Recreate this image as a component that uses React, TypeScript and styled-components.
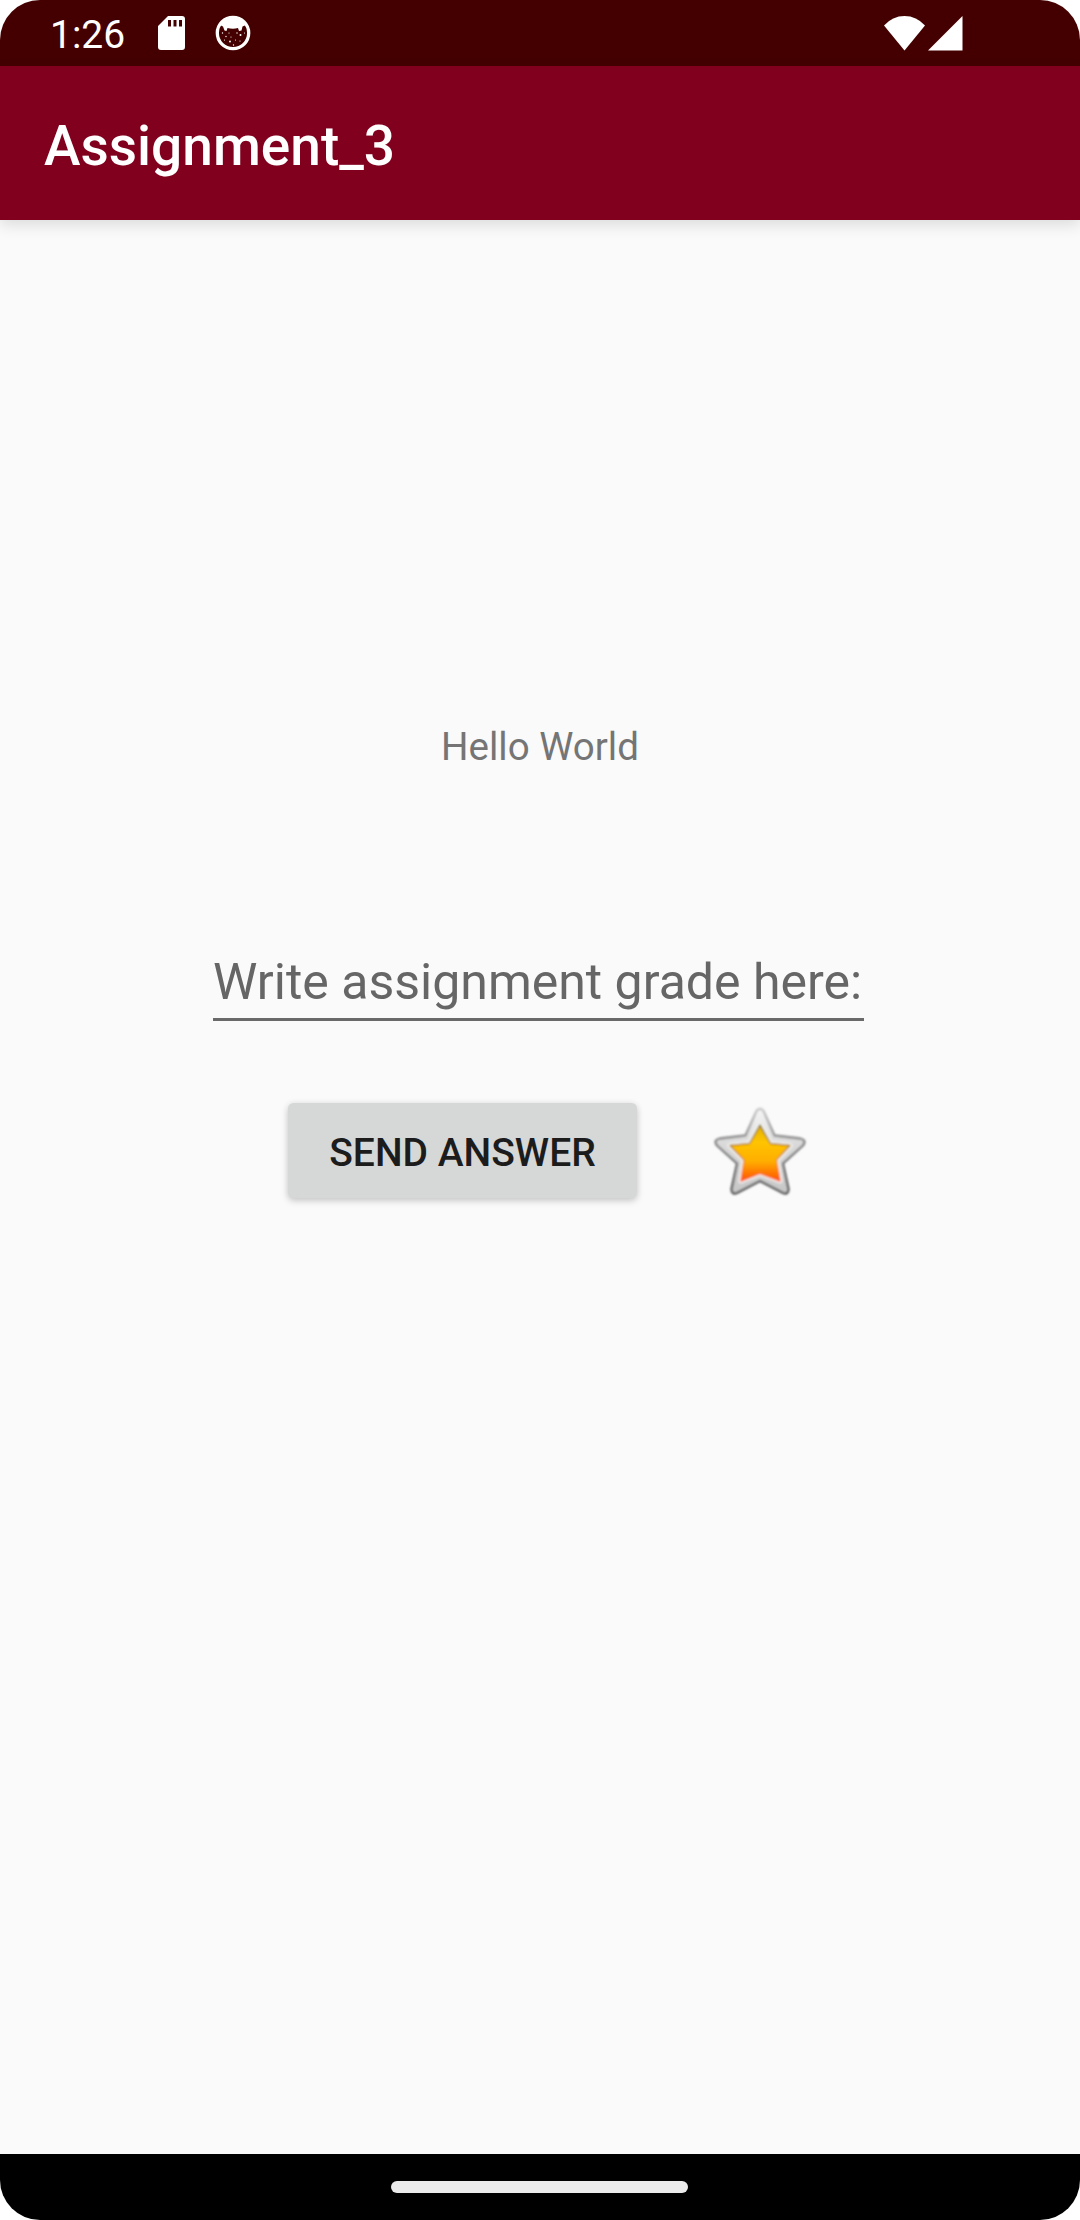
import React from "react";
import styled, { createGlobalStyle } from "styled-components";

const GlobalStyle = createGlobalStyle`
  *, *::before, *::after { box-sizing: border-box; }
  html, body { margin: 0; background: #ffffff; }
  body { font-family: Roboto, "Noto Sans", sans-serif; }
`;

const Screen = styled.div`
  width: 1080px;
  height: 2220px;
  display: flex;
  flex-direction: column;
  overflow: hidden;
  border-radius: 40px;
  background: #fafafa;
`;

const StatusBar = styled.header`
  flex: none;
  height: 66px;
  padding: 0 117px 0 50px;
  display: flex;
  justify-content: space-between;
  background: #440000;
  color: #ffffff;
`;

const StatusGroup = styled.div<{ $gap: number }>`
  display: flex;
  align-items: center;
  gap: ${(p) => p.$gap}px;
`;

const Clock = styled.time`
  width: 78px;
  padding-top: 3px;
  font-size: 39px;
  line-height: 46px;
  white-space: nowrap;
`;

const Glyph = styled.svg`
  display: block;
  flex: none;
`;

const AppBar = styled.div`
  flex: none;
  height: 154px;
  padding: 6px 44px 0;
  display: flex;
  align-items: center;
  background: #80001e;
  box-shadow: 0 5px 14px rgba(0, 0, 0, 0.12);
`;

const Title = styled.h1`
  margin: 0;
  color: #ffffff;
  font-size: 55px;
  font-weight: 500;
  line-height: 64px;
`;

const Content = styled.main`
  flex: 1;
  display: flex;
  flex-direction: column;
  align-items: center;
  padding-top: 501px;
`;

const Greeting = styled.p`
  margin: 0;
  color: #757575;
  font-size: 38.5px;
  line-height: 52px;
`;

const GradeInput = styled.input`
  width: 651px;
  height: 75px;
  margin: 173px 3px 0 0;
  padding: 0 0 1px;
  border: 0;
  border-bottom: 3px solid #696969;
  border-radius: 0;
  outline: 0;
  background: transparent;
  font-family: inherit;
  font-size: 50px;
  color: #1f1f1f;

  &::placeholder {
    color: #666666;
    opacity: 1;
  }
`;

const ActionRow = styled.div`
  width: 1080px;
  margin-top: 81px;
  padding-left: 288px;
  display: flex;
  align-items: flex-start;
  gap: 73px;
`;

const SendButton = styled.button`
  width: 349px;
  height: 95px;
  margin-top: 1px;
  padding: 4px 0 0;
  border: 0;
  border-radius: 5.5px;
  background: #d6d8d7;
  box-shadow: 0 3px 7px rgba(0, 0, 0, 0.18), 0 0 7px rgba(0, 0, 0, 0.06);
  color: #1c1c1c;
  font-family: inherit;
  font-size: 39px;
  font-weight: 500;
  line-height: 46px;
  text-transform: uppercase;
  white-space: nowrap;
`;

const NavBar = styled.footer`
  flex: none;
  height: 66px;
  display: flex;
  align-items: center;
  justify-content: center;
  background: #000000;
`;

const HomePill = styled.div`
  width: 297px;
  height: 12px;
  margin-right: 1px;
  border-radius: 6px;
  background: #ebebeb;
`;

const SdCardIcon = () => (
  <Glyph width="27" height="34" viewBox="0 0 27 34">
    <path
      fill="#fff"
      fillRule="evenodd"
      d="M10 0H24a3 3 0 0 1 3 3V31a3 3 0 0 1-3 3H3a3 3 0 0 1-3-3V10ZM10 4v6.500h3V4ZM15.500 4v6.500h3V4ZM21 4v6.500h3V4Z"
    />
  </Glyph>
);

const CatIcon = () => (
  <Glyph width="36" height="36" viewBox="0 0 36 36">
    <circle cx="18" cy="18" r="15.700" fill="none" stroke="#fff" strokeWidth="3.300" />
    <path
      fill="#fff"
      d="M5 10Q9 2 18 2T31 10L27.500 11.500 26.500 15.500 24 16 23 13Q18 14.500 12.500 13L11.500 16 9.500 15.500 8 11.500Z"
    />
    <g fill="#fff">
      <circle cx="7.500" cy="18" r=".7" />
      <circle cx="14" cy="18" r=".6" />
      <circle cx="11" cy="21.500" r=".7" />
      <circle cx="16" cy="22" r=".6" />
      <circle cx="22" cy="18" r=".7" />
      <circle cx="25.500" cy="20" r="1" />
      <circle cx="29.500" cy="18" r=".6" />
      <circle cx="9.500" cy="25" r=".6" />
      <circle cx="15" cy="26.500" r=".9" />
      <circle cx="20.500" cy="25" r=".6" />
      <circle cx="25" cy="26" r=".6" />
      <circle cx="18.500" cy="30" r=".7" />
    </g>
  </Glyph>
);

const WifiIcon = () => (
  <Glyph width="41" height="35" viewBox="0 0 41 35">
    <path fill="#fff" d="M0 9.500Q8.500 0 20.500 0T41 9.500L20.500 34.500Z" />
  </Glyph>
);

const SignalIcon = () => (
  <Glyph width="35" height="35" viewBox="0 0 35 35">
    <path fill="#fff" d="M34.500 0V34.500H0Z" />
  </Glyph>
);

const StarIcon = () => (
  <Glyph width="100" height="100" viewBox="0 0 100 100">
    <defs>
      <linearGradient id="rim" x1="0" y1="0" x2="0" y2="1">
        <stop offset="0" stopColor="#c8c8c8" />
        <stop offset="0.4" stopColor="#808080" />
        <stop offset="1" stopColor="#505050" />
      </linearGradient>
      <linearGradient id="silver" x1="0" y1="0" x2="0" y2="1">
        <stop offset="0" stopColor="#f6f6f6" />
        <stop offset="0.4" stopColor="#dadada" />
        <stop offset="1" stopColor="#c6c6c6" />
      </linearGradient>
      <linearGradient id="gold" x1="0" y1="0" x2="0" y2="1">
        <stop offset="0" stopColor="#e0b000" />
        <stop offset="0.3" stopColor="#ffc400" />
        <stop offset="0.65" stopColor="#ffae00" />
        <stop offset="1" stopColor="#ff5208" />
      </linearGradient>
      <linearGradient id="goldRim" x1="0" y1="0" x2="0" y2="1">
        <stop offset="0" stopColor="#7c6c10" />
        <stop offset="0.4" stopColor="#b07c18" />
        <stop offset="0.7" stopColor="#f0902a" />
        <stop offset="1" stopColor="#ff5a20" />
      </linearGradient>
      <filter id="soft" x="-10%" y="-10%" width="120%" height="120%">
        <feGaussianBlur stdDeviation="0.8" />
      </filter>
    </defs>
    <g filter="url(#soft)" strokeLinejoin="round">
      <path
        fill="url(#silver)"
        stroke="url(#rim)"
        strokeWidth="2.3"
        d="M46.500 9Q50 4.500 53.500 9L64.500 33.500 90 36.500Q97 38 93 43.500L73 61.500 78.500 87Q78.500 93 73 91L50 79 27 91Q21.500 93 21.500 87L27 61.500 7 43.500Q3 38 10 36.500L35.500 33.500Z"
      />
      <path
        fill="none"
        stroke="#f4f4f4"
        strokeWidth="5"
        d="M50 23L60.500 41.500 80 43.500 66.500 58 70 79 50 71.500 31 79 34 58 20 43.500 39.500 41.500Z"
      />
      <path
        fill="url(#gold)"
        stroke="url(#goldRim)"
        strokeWidth="1.5"
        d="M50 23L60.500 41.500 80 43.500 66.500 58 70 79 50 71.500 31 79 34 58 20 43.500 39.500 41.500Z"
      />
    </g>
  </Glyph>
);

export default function App() {
  return (
    <>
      <GlobalStyle />
      <Screen>
        <StatusBar>
          <StatusGroup $gap={30}>
            <Clock>1:26</Clock>
            <SdCardIcon />
            <CatIcon />
          </StatusGroup>
          <StatusGroup $gap={3}>
            <WifiIcon />
            <SignalIcon />
          </StatusGroup>
        </StatusBar>
        <AppBar>
          <Title>Assignment_3</Title>
        </AppBar>
        <Content>
          <Greeting>Hello World</Greeting>
          <GradeInput placeholder="Write assignment grade here:" aria-label="Assignment grade" />
          <ActionRow>
            <SendButton type="button">Send answer</SendButton>
            <StarIcon />
          </ActionRow>
        </Content>
        <NavBar>
          <HomePill />
        </NavBar>
      </Screen>
    </>
  );
}
